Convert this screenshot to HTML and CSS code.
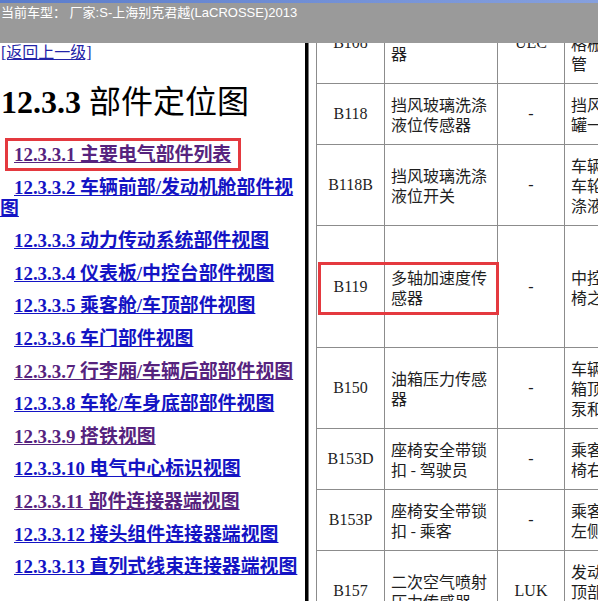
FILE: index.html
```html
<!DOCTYPE html>
<html lang="zh-CN">
<head>
    <meta charset="UTF-8">
    <title>部件定位图</title>
    <link rel="stylesheet" href="styles.css">
</head>
<body>
    <div class="topbar">
        <div class="topbar-line"></div>
        <div class="topbar-title">当前车型： 厂家:S-上海别克君越(LaCROSSE)2013</div>
    </div>

    <div class="frames">
        <div class="nav">
            <a class="back" href="#">[返回上一级]</a>
            <h1 class="chapter"><b>12.3.3</b> 部件定位图</h1>
            <p class="item"><a class="visited" href="#">12.3.3.1 主要电气部件列表</a></p>
            <p class="item"><a href="#">12.3.3.2 车辆前部/发动机舱部件视图</a></p>
            <p class="item"><a href="#">12.3.3.3 动力传动系统部件视图</a></p>
            <p class="item"><a href="#">12.3.3.4 仪表板/中控台部件视图</a></p>
            <p class="item"><a href="#">12.3.3.5 乘客舱/车顶部件视图</a></p>
            <p class="item"><a href="#">12.3.3.6 车门部件视图</a></p>
            <p class="item"><a class="visited" href="#">12.3.3.7 行李厢/车辆后部部件视图</a></p>
            <p class="item"><a href="#">12.3.3.8 车轮/车身底部部件视图</a></p>
            <p class="item"><a class="visited" href="#">12.3.3.9 搭铁视图</a></p>
            <p class="item"><a href="#">12.3.3.10 电气中心标识视图</a></p>
            <p class="item"><a class="visited" href="#">12.3.3.11 部件连接器端视图</a></p>
            <p class="item"><a href="#">12.3.3.12 接头组件连接器端视图</a></p>
            <p class="item"><a href="#">12.3.3.13 直列式线束连接器端视图</a></p>
        </div>

        <div class="divider"></div>

        <div class="parts">
            <table class="parts-table">
                <colgroup>
                    <col class="col-code">
                    <col class="col-name">
                    <col class="col-conn">
                    <col class="col-place">
                </colgroup>
                <tr>
                    <td class="code">B108</td>
                    <td class="name">环境空气温度传感<br>器</td>
                    <td class="code">UEC</td>
                    <td class="name">发动机舱右前部<br>格栅后，进气<br>管</td>
                </tr>
                <tr>
                    <td class="code">B118</td>
                    <td class="name">挡风玻璃洗涤<br>液位传感器</td>
                    <td class="dash">-</td>
                    <td class="name">挡风玻璃洗涤液<br>罐一侧</td>
                </tr>
                <tr>
                    <td class="code">B118B</td>
                    <td class="name">挡风玻璃洗涤<br>液位开关</td>
                    <td class="dash">-</td>
                    <td class="name">车辆前部，左前<br>车轮罩内，洗<br>涤液罐上</td>
                </tr>
                <tr class="tall">
                    <td class="code">B119</td>
                    <td class="name">多轴加速度传<br>感器</td>
                    <td class="dash">-</td>
                    <td class="name">中控台下方，前座<br>椅之间</td>
                </tr>
                <tr>
                    <td class="code">B150</td>
                    <td class="name">油箱压力传感<br>器</td>
                    <td class="dash">-</td>
                    <td class="name">车辆后部，燃油<br>箱顶部，燃油<br>泵和油位传感器</td>
                </tr>
                <tr>
                    <td class="code">B153D</td>
                    <td class="name">座椅安全带锁<br>扣 - 驾驶员</td>
                    <td class="dash">-</td>
                    <td class="name">乘客舱，驾驶员座<br>椅右侧</td>
                </tr>
                <tr>
                    <td class="code">B153P</td>
                    <td class="name">座椅安全带锁<br>扣 - 乘客</td>
                    <td class="dash">-</td>
                    <td class="name">乘客舱，乘客座椅<br>左侧</td>
                </tr>
                <tr>
                    <td class="code">B157</td>
                    <td class="name">二次空气喷射<br>压力传感器</td>
                    <td class="code">LUK</td>
                    <td class="name">发动机舱，发动机<br>顶部，二次空气<br>泵附近</td>
                </tr>
            </table>
        </div>
    </div>

    <!-- red highlight frames drawn over the page -->
    <div class="mark mark-nav"></div>
    <div class="mark mark-row"></div>
</body>
</html>
```

FILE: styles.css
```css
:root {
    --bar-gray: #9a9a9a;
    --link-blue: #1414c4;
    --link-visited: #56237e;
    --grid: #8c8c8c;
    --mark-red: #e4393f;
}
html, body {
    margin: 0;
    padding: 0;
    height: 100%;
    overflow: hidden;
    background: #fff;
    font-family: "Liberation Serif", "Noto Sans CJK SC", serif;
}

/* top bar sits over both frames */
.topbar {
    position: fixed;
    top: 0;
    left: 0;
    right: 0;
    height: 43px;
    background: var(--bar-gray);
    z-index: 2;
}
.topbar-line {
    height: 3px;
    background: linear-gradient(to right, #5a7ccc, #86a0de);
}
.topbar-title {
    padding: 1px 0 0 1px;
    font-family: "Liberation Sans", "Noto Sans CJK SC", sans-serif;
    font-size: 13px;
    line-height: 18px;
    color: #fff;
    white-space: nowrap;
}

.frames {
    display: flex;
    height: 100%;
}

/* left frame: chapter navigation */
.nav {
    width: 305px;
    flex: none;
    padding-top: 43px;
    overflow: hidden;
}
.back {
    display: block;
    padding-left: 1px;
    font-size: 16px;
    line-height: 20px;
    color: #2424a8;
}
.chapter {
    margin: 21px 0 24px 1px;
    font-size: 32px;
    line-height: 36px;
    font-weight: normal;
    color: #000;
    white-space: nowrap;
}
.chapter b {
    font-weight: bold;
}
.item {
    margin: 0 0 11.6px 0;
    text-indent: 14px;
    font-size: 18.9px;
    line-height: 21px;
    font-weight: bold;
}
.item a {
    color: var(--link-blue);
}
.item a.visited {
    color: var(--link-visited);
}

.divider {
    width: 3px;
    flex: none;
    background: #000;
    border-right: 1px solid #7a7a7a;
}

/* right frame: parts list, scrolled a little */
.parts {
    flex: 1 1 auto;
    overflow: hidden;
    padding: 2px 0 0 7px;
}
.parts-table {
    width: 378px;
    table-layout: fixed;
    border-collapse: collapse;
}
.col-code { width: 68px; }
.col-name { width: 113px; }
.col-conn { width: 67px; }
.col-place { width: 130px; }
.parts-table td {
    border: 1px solid var(--grid);
    padding: 10px 6px;
    font-size: 16px;
    line-height: 20px;
    vertical-align: middle;
    color: #1e1e1e;
    white-space: nowrap;
    overflow: hidden;
}
.parts-table td.code,
.parts-table td.dash {
    text-align: center;
    font-family: "Liberation Serif", serif;
}
.parts-table td.name {
    font-family: "Noto Sans CJK SC", sans-serif;
}
.parts-table tr.tall {
    height: 122px;
}

.mark {
    position: absolute;
    border: 3px solid var(--mark-red);
    z-index: 3;
}
.mark-nav {
    left: 5px;
    top: 138px;
    width: 230px;
    height: 27px;
}
.mark-row {
    left: 318px;
    top: 262px;
    width: 175px;
    height: 47px;
}
```
